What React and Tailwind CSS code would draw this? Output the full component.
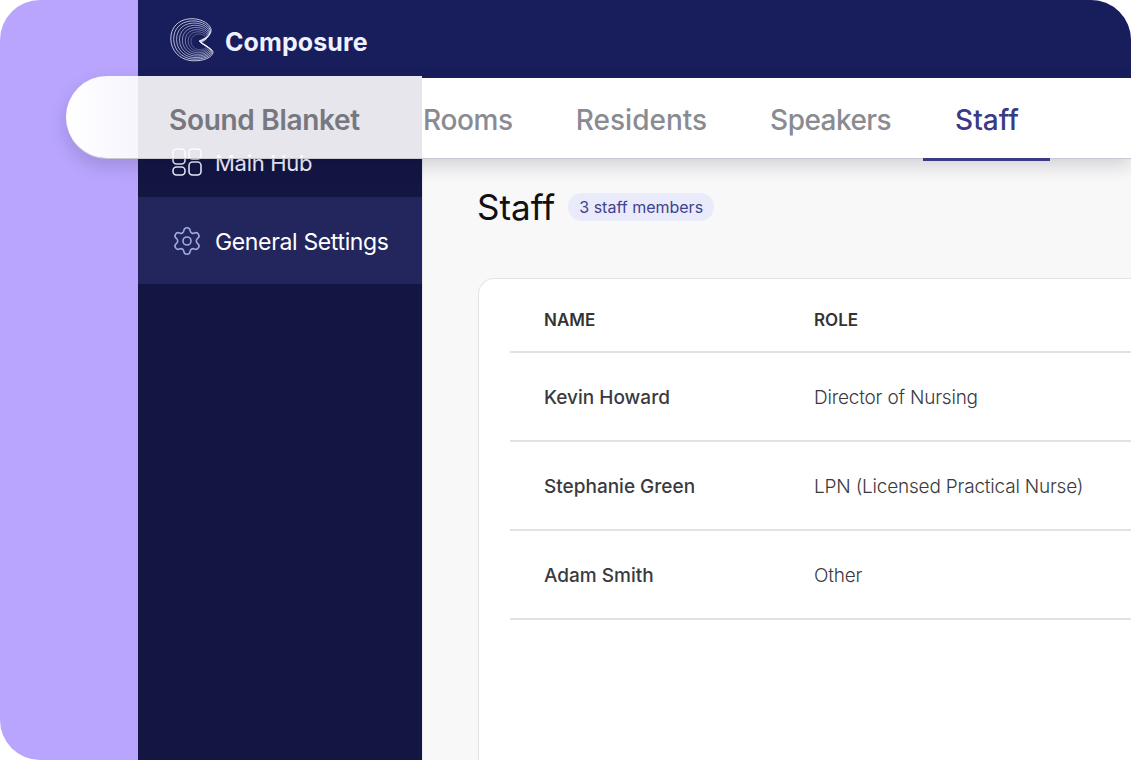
import React from 'react';
import { Settings } from 'lucide-react';

const font = { fontFamily: 'Inter, "Liberation Sans", sans-serif' };

const staff = [
  { name: 'Kevin Howard', role: 'Director of Nursing' },
  { name: 'Stephanie Green', role: 'LPN (Licensed Practical Nurse)' },
  { name: 'Adam Smith', role: 'Other' },
];

const tabs = [
  { label: 'Rooms', cls: 'tracking-[-0.35px]' },
  { label: 'Residents', cls: '' },
  { label: 'Speakers', cls: 'tracking-[-0.55px]' },
];

function Logo() {
  const scales = [1, 0.91, 0.82, 0.73, 0.64, 0.55, 0.46, 0.37];
  return (
    <svg width="44" height="44" viewBox="0 0 44 44" fill="none" stroke="#f1f3ff" strokeWidth="0.8">
      {scales.map((s) => (
        <path
          key={s}
          transform={`translate(${33 * (1 - s)} ${25 * (1 - s)}) scale(${s})`}
          d="M29 23C36 20 42 17 41 11C39 4 28 0 20 .8C8 1.5 .5 10 .8 21C1 33 10 41 20 42.5C28 43.5 40 42 43 35C44 31 35 29 29 23Z"
        />
      ))}
    </svg>
  );
}

function HubIcon() {
  return (
    <svg width="30" height="28" viewBox="0 0 30 28" fill="none" stroke="#eceefc" strokeWidth="1.6">
      <rect x="1" y="1" width="12" height="15" rx="3.5" />
      <rect x="17" y="1" width="12" height="10" rx="3.5" />
      <rect x="1" y="19" width="12" height="8" rx="3.5" />
      <rect x="17" y="14" width="12" height="13" rx="3.5" />
    </svg>
  );
}

export default function App() {
  return (
    <div className="relative w-[1131px] h-[760px] overflow-hidden bg-white" style={font}>
      <div className="flex h-full rounded-[40px] rounded-br-none overflow-hidden bg-[#b9a5fd]">
        <div className="w-[138px] shrink-0" />
        <div className="flex flex-col flex-1 min-w-0">
          {/* top bar */}
          <div className="h-[78px] shrink-0 bg-[#181d5c] flex items-start pl-[32px] pt-[18px] gap-[11px]">
            <Logo />
            <span className="text-[25px] leading-[48px] font-bold text-[#eef1ff] tracking-[0.1px]">Composure</span>
          </div>

          <div className="flex flex-1 min-h-0">
            {/* sidebar */}
            <div className="w-[284px] shrink-0 bg-[#131543] pt-[51px]">
              <div className="h-[68px] flex items-center gap-[13px] pl-[34px] pb-[2px] text-[22px] tracking-[-0.3px] text-[#f3f4ff]">
                <HubIcon />
                <span className="pt-[2px]">Main Hub</span>
              </div>
              <div className="h-[87px] flex items-center gap-[12px] pl-[33px] bg-[#22265c] text-[23px] tracking-[-0.35px] text-white">
                <Settings size={32} strokeWidth={1.2} className="text-[#a3a9df]" />
                <span className="pt-[4px]">General Settings</span>
              </div>
            </div>

            {/* content */}
            <div className="flex-1 min-w-0 bg-[#f8f8f8] pl-[55px] pt-[109px] border-l border-[#e8e8ee]">
              <div className="flex items-center gap-[13px] h-[40px] -ml-px">
                <h1 className="text-[35px] leading-[40px] font-normal text-[#111]">Staff</h1>
                <span className="h-[28px] px-[11px] flex items-center rounded-full bg-[#e9ebfb] text-[16px] text-[#41418f]">3 staff members</span>
              </div>

              <div className="mt-[51px] h-[600px] rounded-tl-[16px] border border-[#e3e3e3] border-r-0 bg-white pl-[31px]">
                <div className="grid grid-cols-[270px_1fr] h-[74px] pt-[12px] items-center pl-[34px] border-b-2 border-[#e2e2e2] text-[17px] font-semibold text-[#333]">
                  <span>NAME</span>
                  <span>ROLE</span>
                </div>
                {staff.map((s) => (
                  <div key={s.name} className="grid grid-cols-[270px_1fr] h-[89px] pt-[4px] items-center pl-[34px] border-b-2 border-[#e2e2e2] text-[19px] text-[#3a3a3e]">
                    <span className="font-medium">{s.name}</span>
                    <span className="font-light tracking-[-0.2px]">{s.role}</span>
                  </div>
                ))}
              </div>
            </div>
          </div>
        </div>
      </div>

      {/* floating tab bar, left part is see-through glass */}
      <div className="absolute left-[66px] right-0 top-[76px] h-[82px] flex rounded-l-[41px] shadow-[0_1px_0_#c9c9d3,0_8px_18px_rgba(20,20,50,0.16)]">
        <div className="w-[72px] shrink-0 rounded-l-[41px] bg-gradient-to-r from-white to-[#fefdff]/90" />
        <div className="w-[284px] shrink-0 bg-[#fefdff]/90 pl-[31px] flex items-center text-[28px] font-semibold tracking-[-0.3px] text-[#76777f]">
          <span className="pt-[6px]">Sound Blanket</span>
        </div>
        <div className="flex-1 bg-white border-t-2 border-[#181d5c] pl-px flex items-stretch gap-[63px] text-[28px] font-medium text-[#8a8b92]">
          {tabs.map((t) => (
            <span key={t.label} className={`flex items-center pt-[4px] ${t.cls}`}>{t.label}</span>
          ))}
          <span className="relative flex items-center pt-[4px] text-[#3b3a85] -ml-[31px] pl-[32px] pr-[31px]">
            Staff
            <span className="absolute left-0 right-0 top-full h-[3px] bg-[#3b3a85]" />
          </span>
        </div>
      </div>
    </div>
  );
}
